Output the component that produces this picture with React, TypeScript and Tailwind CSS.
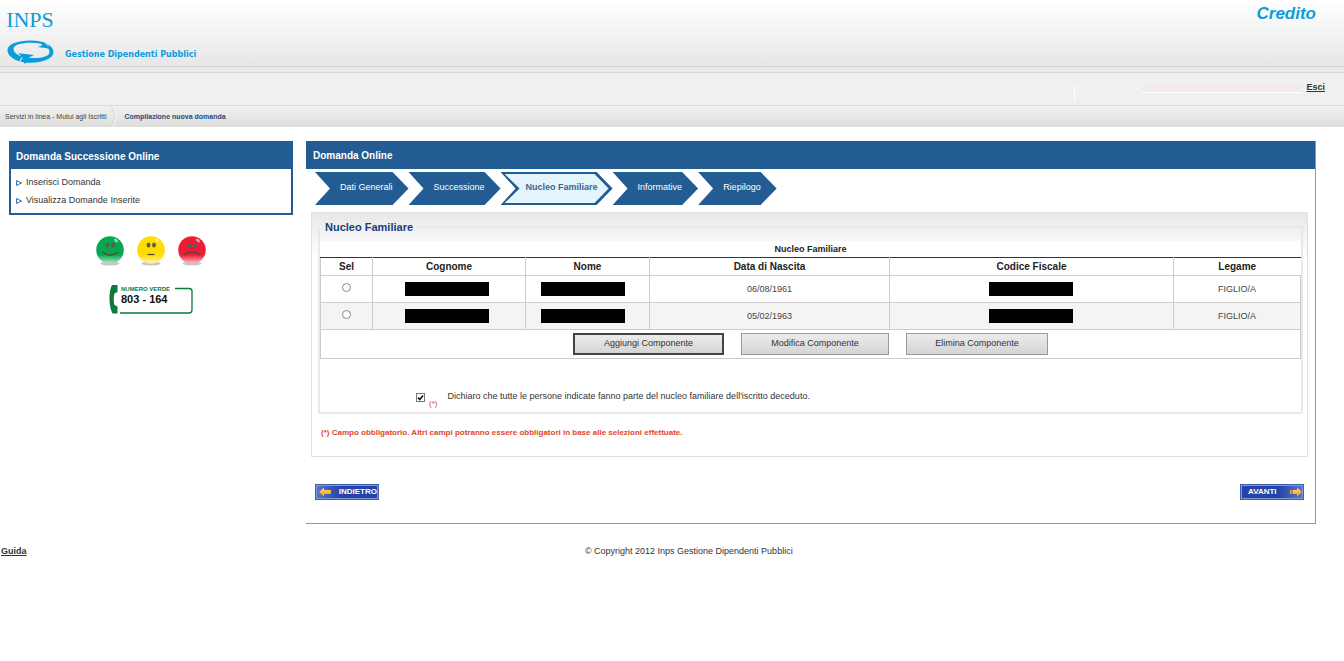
type Step = {
  label: string;
  active?: boolean;
};

type FamilyMember = {
  id: string;
  birthDate: string;
  relation: string;
};

type SmileyProps = {
  label: string;
  color: string;
  mouth: string;
};

const steps: Step[] = [
  { label: "Dati Generali" },
  { label: "Successione" },
  { label: "Nucleo Familiare", active: true },
  { label: "Informative" },
  { label: "Riepilogo" },
];

const members: FamilyMember[] = [
  { id: "1", birthDate: "06/08/1961", relation: "FIGLIO/A" },
  { id: "2", birthDate: "05/02/1963", relation: "FIGLIO/A" },
];

const menuItems = ["Inserisci Domanda", "Visualizza Domande Inserite"];

const smileys: SmileyProps[] = [
  { label: "Soddisfatto", color: "#06a84e", mouth: "M6 16 Q14 22 22 16" },
  { label: "Neutro", color: "#ffdd00", mouth: "M10.500 18.500 H17.500" },
  { label: "Insoddisfatto", color: "#ee1c36", mouth: "M6 19 Q14 12.500 22 19" },
];

function InpsLogo() {
  return (
    <div className="w-12 text-[#0a9ddb]">
      <div className="flex h-10 items-center justify-center font-['Liberation_Serif',serif] text-[22px] leading-10">
        INPS
      </div>
      <svg viewBox="0 0 48 24" className="h-6 w-12" fill="currentColor" aria-hidden="true">
        <path
          fillRule="evenodd"
          d="M24.500 0.500 C37 0.500 47.500 5 47.500 12 C47.500 18.500 37 22.800 24.500 22.800 C12 22.800 1.500 17.500 1.500 10 C1.500 4 12 0.500 24.500 0.500 Z M25 2.800 C15 2.800 7.500 5 7.500 9 C7.500 14 16 18 27 18 C37 18 43.500 16 43.500 12 C43.500 6 35 2.800 25 2.800 Z"
        />
        <path d="M14 21 L17.500 15.500" stroke="#ececec" strokeWidth="1.200" />
        <path d="M12.500 13.300 L28 15 L23 17.500 L25 20.500 L18 23.800 L17 18.500 Z" />
        <path d="M37 1.500 L42.500 8.500 L32 7 L36 5.200 Z" />
        <path d="M38.500 1.500 L42.500 6" stroke="#ececec" />
      </svg>
    </div>
  );
}

function Smiley({ label, color, mouth }: SmileyProps) {
  const gradientId = `shade-${label}`;
  return (
    <svg viewBox="0 0 28 30" className="h-[30px] w-7" role="img" aria-label={label}>
      <defs>
        <linearGradient id={gradientId} x1="0" y1="0" x2="0" y2="1">
          <stop offset="0.680" stopColor={color} />
          <stop offset="1" stopColor={color} stopOpacity="0.250" />
        </linearGradient>
      </defs>
      <ellipse cx="14" cy="27.500" rx="9.500" ry="2" fill="#c8c8c8" />
      <circle cx="14" cy="14" r="13.500" fill="#fff" />
      <circle cx="14" cy="14" r="13.800" fill={`url(#${gradientId})`} />
      <ellipse cx="20" cy="4.500" rx="2.500" ry="1.300" fill="#fff" opacity="0.550" transform="rotate(40 20 4.500)" />
      <ellipse cx="11.500" cy="9" rx="1.900" ry="2.500" fill="#5d5a50" />
      <ellipse cx="17" cy="9" rx="1.900" ry="2.500" fill="#5d5a50" />
      <path d={mouth} fill="none" stroke="#4f4a3c" strokeWidth="1.300" />
    </svg>
  );
}

function TollFreeNumber() {
  return (
    <svg viewBox="0 0 84 30" className="h-[30px] w-[84px]" role="img" aria-label="Numero verde 803 - 164">
      <path
        d="M3 1 H8.500 V8 L5.500 9.500 C4.500 13 4.500 18 5.500 21 L8.500 22.500 V29.500 H3.500 C-0.500 22 -0.500 8 3 1 Z"
        fill="#0b7a3b"
      />
      <path d="M66 4.500 H80 Q83 4.500 83 7 V26 Q83 29 80 29 H11" fill="none" stroke="#0b7a3b" strokeWidth="1.300" />
      <text x="12" y="7" fontSize="6" fontWeight="bold" fontFamily="Liberation Sans, sans-serif" fill="#0b7a3b">
        NUMERO VERDE
      </text>
      <text x="12" y="19" fontSize="11" fontWeight="bold" fontFamily="Liberation Sans, sans-serif" fill="#111">
        803 - 164
      </text>
    </svg>
  );
}

function Arrow({ left = false }: { left?: boolean }) {
  return (
    <svg viewBox="0 0 12 10" className="h-[10px] w-3" aria-hidden="true">
      <path
        d={left ? "M0 5 L5 0.500 V3 H12 V7 H5 V9.500 Z" : "M12 5 L7 0.500 V3 H3 V7 H7 V9.500 Z M0 3 H1 V7 H0 Z M1.500 3 H2.500 V7 H1.500 Z"}
        fill="#fbb034"
      />
      <path d={left ? "M2 4.500 L4.500 2 V4 H11" : "M3 4 H8 V2 L10 4.500"} fill="none" stroke="#ffe05c" />
    </svg>
  );
}

function StepItem({ label, active }: Step) {
  if (active) {
    return (
      <li
        aria-current="step"
        className="h-[33px] bg-[#225c92] px-1 py-0.5 [clip-path:polygon(0_0,calc(100%-16px)_0,100%_50%,calc(100%-16px)_100%,0_100%,15px_50%)]"
      >
        <span className="flex h-full items-center bg-[#e4f4fb] pr-[11px] pb-0.5 pl-[21px] font-bold text-[#3a6496] [clip-path:polygon(0_0,calc(100%-14px)_0,100%_50%,calc(100%-14px)_100%,0_100%,15px_50%)]">
          {label}
        </span>
      </li>
    );
  }
  return (
    <li className="flex h-[33px] items-center bg-[#225c92] pr-4 pb-0.5 pl-[25px] text-white [clip-path:polygon(0_0,calc(100%-16px)_0,100%_50%,calc(100%-16px)_100%,0_100%,15px_50%)]">
      {label}
    </li>
  );
}

function Redacted() {
  return <span className="mx-auto block h-3.5 w-[84px] bg-black" />;
}

function Header() {
  return (
    <header>
      <div className="flex h-[67px] items-start justify-between border-b border-[#c9d2dc] bg-linear-to-b from-white to-[#e7e7e7] pr-7 pl-1.5">
        <div className="flex items-end gap-[11px]">
          <InpsLogo />
          <span className="pb-[3px] font-['DejaVu_Sans',sans-serif] text-[8px] leading-3 font-bold text-[#0a9ddb]">
            Gestione Dipendenti Pubblici
          </span>
        </div>
        <h1 className="pt-1 text-[17px] leading-5 font-bold text-[#0a9ddb] italic">Credito</h1>
      </div>
      <div className="h-1.5 border-b border-[#d6d8da] bg-[#e9e9e9]" />
      <div className="flex h-[33px] items-center justify-end border-b border-[#d9dbdd] bg-[#f0f0f0] pr-[19px]">
        <span className="mt-2 mr-[66px] h-4 w-px bg-white" />
        <span className="mr-[5px] h-2 w-[160px] border-b border-white bg-[#f2ebe9]" />
        <a href="#" className="pb-0.5 text-[9px] font-bold text-[#333] underline">
          Esci
        </a>
      </div>
      <nav className="flex h-[21px] items-center bg-linear-to-b from-[#f0f0ef] to-[#dededc] pl-[5px] text-[7px]">
        <a href="#" className="pt-0.5 pr-1 text-[#444]">
          Servizi in linea - Mutui agli Iscritti
        </a>
        <svg viewBox="0 0 6 21" className="h-[21px] w-1.5" fill="none" aria-hidden="true">
          <path d="M1.500 0 L5.500 10.500 L1.500 21" stroke="#fff" />
          <path d="M0.500 0 L4.500 10.500 L0.500 21" stroke="#d2d2d2" />
        </svg>
        <span className="pt-0.5 pl-2 font-bold text-[#1d4a80]">Compilazione nuova domanda</span>
      </nav>
    </header>
  );
}

function Sidebar() {
  return (
    <aside className="w-[284px] shrink-0">
      <div className="border-2 border-t-0 border-[#225c92]">
        <h2 className="flex h-7 items-center bg-[#225c92] pt-0.5 pl-[5px] text-[10px] font-bold text-white">
          Domanda Successione Online
        </h2>
        <ul className="pt-[5px] pb-[3px] pl-[5px] text-[9px] text-[#333]">
          {menuItems.map((item) => (
            <li key={item} className="flex h-[18px] items-center gap-1">
              <svg viewBox="0 0 6 6" className="h-1.5 w-1.5" fill="none" stroke="#3a6ea5" aria-hidden="true">
                <path d="M0.500 0.500 L5.500 3 L0.500 5.500 Z" />
              </svg>
              <a href="#">{item}</a>
            </li>
          ))}
        </ul>
      </div>
      <div className="mt-[21px] flex justify-center gap-[13px]">
        {smileys.map((smiley) => (
          <Smiley key={smiley.label} {...smiley} />
        ))}
      </div>
      <div className="mt-[18px] flex justify-center">
        <TollFreeNumber />
      </div>
    </aside>
  );
}

function FamilyTable() {
  return (
    <table className="w-full table-fixed border-collapse bg-white text-center">
      <caption className="h-4 bg-white text-[9px] leading-4 font-bold text-[#222]">Nucleo Familiare</caption>
      <colgroup>
        <col className="w-[52px]" />
        <col className="w-[153px]" />
        <col className="w-[124px]" />
        <col className="w-[240px]" />
        <col className="w-[284px]" />
        <col className="w-[127px]" />
      </colgroup>
      <thead>
        <tr className="h-[18px] divide-x divide-[#ccc] border-t border-l border-[#333] border-l-[#ccc] text-[10px] leading-4 text-[#222]">
          <th>Sel</th>
          <th>Cognome</th>
          <th>Nome</th>
          <th>Data di Nascita</th>
          <th>Codice Fiscale</th>
          <th>Legame</th>
        </tr>
      </thead>
      <tbody className="text-[9px] text-[#444]">
        {members.map((member) => (
          <tr key={member.id} className="h-[27px] divide-x divide-[#ccc] border border-[#ccc] even:bg-[#f4f4f4]">
            <td>
              <input
                type="radio"
                name="member"
                aria-label={`Seleziona componente ${member.id}`}
                className="mx-auto mb-1 block h-[9px] w-[9px] appearance-none rounded-full border border-[#888] bg-white"
              />
            </td>
            <td className="pr-1">
              <Redacted />
            </td>
            <td className="pr-2.5">
              <Redacted />
            </td>
            <td className="pt-0.5">{member.birthDate}</td>
            <td className="pr-0.5">
              <Redacted />
            </td>
            <td className="pt-0.5">{member.relation}</td>
          </tr>
        ))}
      </tbody>
    </table>
  );
}

function FamilyPanel() {
  return (
    <div className="mt-[7px] mr-[7px] ml-[5px] border border-[#dbe1ec] bg-linear-to-b from-[#e7e9e8] to-white to-[46px] px-1.5 pt-1.5 pb-4">
      <fieldset className="border-2 border-[#e9e9e9] pt-1.5">
        <legend className="px-[5px] text-[11px] leading-4 font-bold text-[#163f78]">Nucleo Familiare</legend>
        <FamilyTable />
        <div className="flex justify-center gap-[17px] border-x border-b border-[#ccc] bg-white pt-[3px] pb-[3px] text-[9px] text-[#333]">
          <button
            type="button"
            className="h-[22px] w-[151px] border-2 border-[#444] bg-linear-to-b from-[#ececec] to-[#d4d4d4]"
          >
            Aggiungi Componente
          </button>
          <button
            type="button"
            className="h-[22px] w-[148px] border border-[#999] bg-linear-to-b from-[#ececec] to-[#d4d4d4]"
          >
            Modifica Componente
          </button>
          <button
            type="button"
            className="h-[22px] w-[142px] border border-[#999] bg-linear-to-b from-[#ececec] to-[#d4d4d4]"
          >
            Elimina Componente
          </button>
        </div>
        <div className="flex items-start pt-[31px] pb-0.5 pl-24 text-[9px] text-[#333]">
          <span className="mt-[3px] grid h-[9px] w-[9px]">
            <input
              id="dichiarazione"
              type="checkbox"
              defaultChecked
              className="peer col-start-1 row-start-1 h-[9px] w-[9px] appearance-none border border-[#777] bg-white"
            />
            <svg
              viewBox="0 0 9 9"
              className="pointer-events-none invisible col-start-1 row-start-1 h-[9px] w-[9px] peer-checked:visible"
              fill="none"
              stroke="#111"
              strokeWidth="1.500"
              aria-hidden="true"
            >
              <path d="M2 4.500 L3.800 6.500 L7 2.500" />
            </svg>
          </span>
          <span className="mt-2 ml-1 text-[8px] leading-3 text-[#e0452c]">(*)</span>
          <label htmlFor="dichiarazione" className="ml-2.5 leading-3">
            Dichiaro che tutte le persone indicate fanno parte del nucleo familiare dell'iscritto deceduto.
          </label>
        </div>
      </fieldset>
      <p className="mt-3 pl-[3px] text-[8px] leading-[14px] font-bold text-[#e0452c]">
        (*) Campo obbligatorio. Altri campi potranno essere obbligatori in base alle selezioni effettuate.
      </p>
    </div>
  );
}

export default function App() {
  return (
    <div className="bg-white font-['Liberation_Sans',Arial,sans-serif]">
      <Header />
      <div className="flex items-start gap-[13px] pt-3.5 pr-7 pl-[9px]">
        <Sidebar />
        <main className="min-w-0 flex-1 border-r border-b border-[#7b9dbd] pb-[23px]">
          <h2 className="flex h-7 items-center bg-[#225c92] pt-px pl-[7px] text-[10px] font-bold text-white">
            Domanda Online
          </h2>
          <ol className="mt-[3px] flex pl-[9px] text-[9px]">
            {steps.map((step) => (
              <StepItem key={step.label} {...step} />
            ))}
          </ol>
          <FamilyPanel />
          <div className="mt-[27px] flex justify-between pr-[11px] pl-[9px] text-[8px] font-bold text-white">
            <button
              type="button"
              className="flex h-4 w-16 items-center justify-between border-2 border-[#7f98d4] bg-linear-to-r from-[#5674cc] to-[#2444a8] to-40% pl-0.5 outline-1 -outline-offset-1 outline-[#3f5fae]"
            >
              <Arrow left />
              INDIETRO
            </button>
            <button
              type="button"
              className="flex h-4 w-16 items-center justify-between border-2 border-[#7f98d4] bg-linear-to-r from-[#2444a8] from-60% to-[#5674cc] pl-1.5 outline-1 -outline-offset-1 outline-[#3f5fae]"
            >
              AVANTI
              <Arrow />
            </button>
          </div>
        </main>
      </div>
      <footer className="mt-5 flex items-center px-px text-[9px] leading-[14px] text-[#333]">
        <a href="#" className="font-bold underline">
          Guida
        </a>
        <p className="flex-1 pl-2 text-center">© Copyright 2012 Inps Gestione Dipendenti Pubblici</p>
      </footer>
    </div>
  );
}
